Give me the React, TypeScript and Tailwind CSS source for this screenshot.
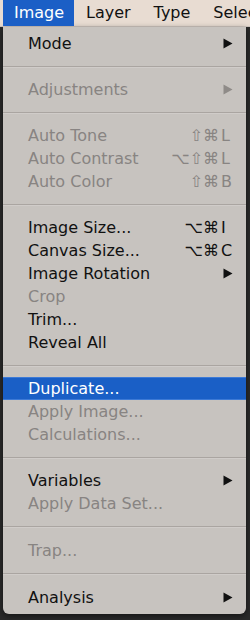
import React from "react";

type Item =
  | { sep: true; h?: number }
  | { label: string; dim?: boolean; sub?: boolean; mods?: string; key?: string; active?: boolean };

const items: Item[] = [
  { label: "Mode", sub: true },
  { sep: true },
  { label: "Adjustments", dim: true, sub: true },
  { sep: true },
  { label: "Auto Tone", dim: true, mods: "⇧⌘", key: "L" },
  { label: "Auto Contrast", dim: true, mods: "⌥⇧⌘", key: "L" },
  { label: "Auto Color", dim: true, mods: "⇧⌘", key: "B" },
  { sep: true },
  { label: "Image Size...", mods: "⌥⌘", key: "I" },
  { label: "Canvas Size...", mods: "⌥⌘", key: "C" },
  { label: "Image Rotation", sub: true },
  { label: "Crop", dim: true },
  { label: "Trim..." },
  { label: "Reveal All" },
  { sep: true },
  { label: "Duplicate...", active: true },
  { label: "Apply Image...", dim: true },
  { label: "Calculations...", dim: true },
  { sep: true },
  { label: "Variables", sub: true },
  { label: "Apply Data Set...", dim: true },
  { sep: true, h: 24 },
  { label: "Trap...", dim: true },
  { sep: true, h: 24 },
  { label: "Analysis", sub: true },
];

function Arrow({ color }: { color: string }) {
  return (
    <svg width="10" height="11" viewBox="0 0 10 11" className="mr-[1px]">
      <polygon points="0.5,0.5 9.5,5.5 0.5,10.5" fill={color} />
    </svg>
  );
}

export default function App() {
  return (
    <div
      className="w-[250px] h-[620px] bg-[#2a2a2a] overflow-hidden"
      style={{ fontFamily: '"DejaVu Sans", sans-serif' }}
    >
      {/* menu bar */}
      <div className="h-[27px] bg-[#e8dcd2] flex items-stretch text-[16px] text-[#111] border-b border-[#cfc6bf] overflow-hidden">
        <div className="shrink-0 ml-[3px] w-[71px] bg-[#1b5fc6] text-white flex items-center pl-[11px]">Image</div>
        <div className="shrink-0 ml-[12px] flex items-center">Layer</div>
        <div className="shrink-0 ml-[23px] flex items-center">Type</div>
        <div className="shrink-0 ml-[23px] flex items-center whitespace-nowrap">Select</div>
      </div>

      {/* dropdown */}
      <div className="ml-[3px] w-[243px] bg-[#c7c3bf] rounded-b-[6px] pt-[5px] pb-[5px] shadow-[0_2px_6px_rgba(0,0,0,0.5)]">
        {items.map((it, i) =>
          "sep" in it ? (
            <div
              key={i}
              className={(it.h === 24 ? "h-[24px]" : "h-[23px]") + " flex flex-col justify-center"}
            >
              <div className="h-[1px] bg-[#aaa5a1]" />
              <div className="h-[1px] bg-[#d0ccc9]" />
            </div>
          ) : (
            <div
              key={i}
              className={
                "h-[23px] flex items-center pl-[25px] pr-[12px] text-[16px] leading-none " +
                (it.active
                  ? "bg-[#1a5fc6] text-white border-y border-[#3d7ad6]"
                  : it.dim
                  ? "text-[#888482]"
                  : "text-[#111111]")
              }
            >
              <span className="flex-1 whitespace-nowrap">{it.label}</span>
              {it.mods && (
                <span className="flex items-center">
                  <span className="text-right">{it.mods}</span>
                  <span className="w-[15px] pl-[2px]">{it.key}</span>
                </span>
              )}
              {it.sub && <Arrow color={it.dim ? "#8f8b88" : "#111111"} />}
            </div>
          )
        )}
      </div>
    </div>
  );
}
